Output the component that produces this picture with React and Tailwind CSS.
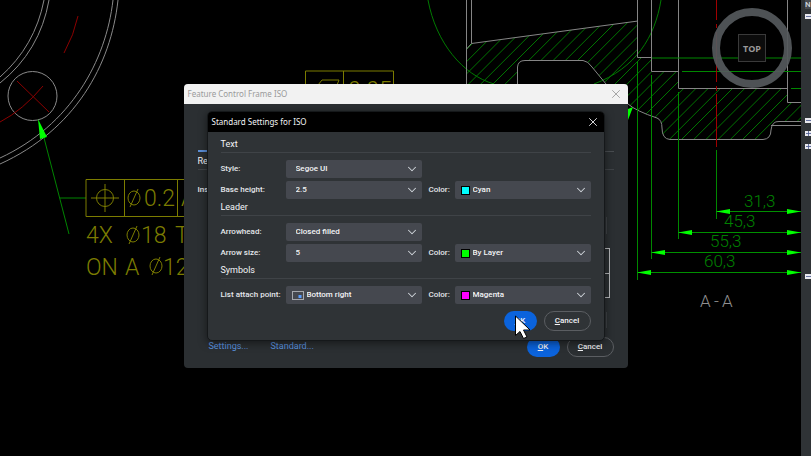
import React, { useState } from "react";
import { ChevronDown, X } from "lucide-react";

const NAMED_COLORS = ["Cyan", "By Layer", "Magenta"];

// 45 degree hatching, clipped to the cut faces
const HATCH_STEP = 12.2;
const hatch = Array.from({ length: 36 }, (_, k) => {
    const sum = 516 + k * HATCH_STEP;
    return `M${sum - 150} 150L${sum} 0`;
}).join("");

const dimensions = [
    { x: 716, y: 212, text: "31,3", tx: 744, ty: 207 },
    { x: 678, y: 233, text: "45,3", tx: 724, ty: 227 },
    { x: 651, y: 253, text: "55,3", tx: 710, ty: 247 },
    { x: 637, y: 273, text: "60,3", tx: 704, ty: 267 },
];

const Diameter = ({ x, y }) => (
    <path d={`M${x - 6} ${y}a6 7 0 1 0 12 0a6 7 0 1 0 -12 0M${x - 4} ${y + 9}L${x + 4} ${y - 9}`} />
);

const Drawing = () => (
    <svg
        className="absolute inset-0 h-full w-full"
        viewBox="0 0 801 456"
        preserveAspectRatio="xMidYMid slice"
        fill="none"
        aria-label="Flange drawing"
    >
        <clipPath id="cut-faces">
            <path d="M466 49L471 43.5L638 21V57.5H651V71.5H678V88.5H787V102H801V121H779Q772 121 771 130Q771 139 763 139H670Q662 139 662 128Q662 120 657 118Q636 111 628 104L606 84L592 67Q588 61 583 60.5H525Q518 60.5 517.5 67V84H466Z" />
        </clipPath>

        {/* flange, front view */}
        <g stroke="#8a8a8a">
            <path d="M44 0Q35 46 0 77M49 0Q40 51 0 83" />
            <path d="M113 0C106 61 71 125 0 158M118 0C111 65 75 130 0 164" />
            <circle cx="32.5" cy="96" r="24.5" />
        </g>
        <g stroke="#8b0000">
            <path d="M78 16Q74 35 64 53M17 81L49 112M43 86Q23 110 0 122" />
        </g>
        <path d="M43 134L69 234M60 198H86" stroke="#008500" />
        <path d="M38 119L47 137L40 139Z" fill="#00ff00" />

        {/* feature control frames */}
        <g stroke="#7c7c00">
            <path d="M86 179.5H200V216.5H86ZM124.5 179V217M177.5 179V217" />
            <path d="M91 198H119M105 184V212" />
            <circle cx="105" cy="198" r="8.5" />
            <path d="M305.5 90V71H393.5V90M343.5 71V90M318 85L322 80H339L335 90" />
            <Diameter x={134} y={198} />
            <Diameter x={133} y={235} />
            <Diameter x={156} y={266} />
        </g>
        <g className="font-['Roboto',sans-serif] text-[23px] font-light" fill="#7c7c00">
            <text x="144" y="206">0.2</text>
            <text x="181" y="206">A</text>
            <text x="86" y="243">4X</text>
            <text x="141" y="243">18</text>
            <text x="175" y="243">T</text>
            <text x="86" y="275">ON</text>
            <text x="125" y="275">A</text>
            <text x="163" y="275">12</text>
            <text x="348" y="98">0.05</text>
        </g>

        {/* section A-A */}
        <path d={hatch} stroke="#007400" clipPath="url(#cut-faces)" />
        <path d="M428 0C436 43 463 75 494 84M594 84C636 68 655 37 661 0" stroke="#007a00" />
        <path d="M628 109L633 107L628 120Z" fill="#00ff00" />
        <g stroke="#858585">
            <path d="M466.5 0V84M471.5 0V43.5L638 21M466.5 49L471.5 43.5" />
            <path d="M517.5 84V67Q518 60.5 525 60.5H583Q588 61 592 67L606 84" />
            <path d="M637.5 0V57.5H651.5M651.5 0V71.5H678.5M678.5 0V88.5H787.5M787.5 0V102.5H801" />
            <path d="M628 104Q636 111 657 118Q662 120 662 128Q662 139 670 139.5H763Q771 139 771 130Q772 121 779 121.5H801M771 125.5H801" />
        </g>
        <g stroke="#008800">
            <path d="M652 58H801M682 71.5H801M791 88.5H801" />
            <path d="M637.5 61V280M651.5 75V259M678.5 92V239M716.5 150V219" />
        </g>
        <path d="M716.5 0V20M716.5 24V28M716.5 32V82M716.5 86V91M716.5 94V147" stroke="#a00000" />

        {dimensions.map((d) => (
            <g key={d.text}>
                <path d={`M${d.x} ${d.y - 0.5}H801`} stroke="#009000" />
                <path
                    d={`M${d.x} ${d.y - 0.5}l14 -2.5v5ZM801 ${d.y - 0.5}l-14 -2.5v5Z`}
                    fill="#00ff00"
                />
                <text
                    x={d.tx}
                    y={d.ty}
                    className="font-['Roboto',sans-serif] text-[17px] font-light"
                    fill="#008000"
                >
                    {d.text}
                </text>
            </g>
        ))}
        <g className="font-['Roboto',sans-serif] text-[17px] font-light" fill="#909090">
            <text x="700" y="307">A</text>
            <text x="714" y="307">-</text>
            <text x="722" y="307">A</text>
        </g>

        {/* view cube */}
        <circle cx="752" cy="48" r="36" stroke="#55595c" strokeOpacity="0.92" strokeWidth="8" />
        <rect x="738.5" y="34.5" width="27" height="27" fill="#0c0c0c" stroke="#3a3a3a" />
        <text
            x="752"
            y="52"
            textAnchor="middle"
            className="font-['Open_Sans',sans-serif] text-[9px] font-bold"
            fill="#9a9a9a"
        >
            TOP
        </text>
    </svg>
);

const Toggle = ({ label, sign }) => (
    <button
        type="button"
        aria-label={label}
        className="flex h-[5px] w-full items-center justify-center bg-[#e8e8ee]"
    >
        <svg viewBox="0 0 6 6" className="h-[5px] w-[5px]" stroke="#4a5a90">
            <path d={sign === "plus" ? "M0 3H6M3 0V6" : "M0 3H6"} />
        </svg>
    </button>
);

const Palette = () => (
    <aside className="relative flex w-[10px] shrink-0 flex-col overflow-hidden bg-[#2f3336] pl-[4px] font-['Roboto',sans-serif]">
        <p className="mb-[5px] h-[9px] bg-[#474b50] text-[8px] leading-[9px] text-gray-300">N</p>
        <Toggle label="General" />
        <div className="h-[99px]" />
        <Toggle label="Text" />
        <div className="h-[8px]" />
        <Toggle label="Lines" sign="plus" />
        <div className="h-[8px]" />
        <Toggle label="Fit" sign="plus" />
        <div className="h-[125px]" />
        <Toggle label="Units" />
    </aside>
);

const Swatch = ({ color }) => {
    if (color === "Cyan") return <span className="ml-[6px] size-[9px] border border-black bg-[#00ffff]" />;
    if (color === "By Layer") return <span className="ml-[6px] size-[9px] border border-black bg-[#00ff00]" />;
    return <span className="ml-[6px] size-[9px] border border-black bg-[#ff00ff]" />;
};

const Dropdown = ({ id, value, options, onChange, icon }) => (
    <div className="flex h-[18px] min-w-0 items-center rounded-[2px] bg-[#45484f] pr-[3px]">
        {icon}
        <select
            id={id}
            value={value}
            onChange={(e) => onChange(e.target.value)}
            className={
                icon
                    ? "h-full min-w-0 flex-1 appearance-none bg-transparent pl-[3px] text-gray-100 outline-none"
                    : "h-full min-w-0 flex-1 appearance-none bg-transparent pl-[10px] text-gray-100 outline-none"
            }
        >
            {options.map((o) => (
                <option key={o}>{o}</option>
            ))}
        </select>
        <ChevronDown className="pointer-events-none size-[14px] text-gray-300" strokeWidth={1.75} />
    </div>
);

const Row = ({ id, label, options, icon, color }) => {
    const [value, setValue] = useState(options[0]);
    const [colorValue, setColorValue] = useState(color);

    return (
        <div className="grid grid-cols-[65px_1fr_33px_1fr] items-center">
            <label htmlFor={id} className="whitespace-nowrap">{label}</label>
            <Dropdown id={id} value={value} options={options} onChange={setValue} icon={icon} />
            {color && (
                <>
                    <label htmlFor={`${id}-color`} className="pl-[7px]">Color:</label>
                    <Dropdown
                        id={`${id}-color`}
                        value={colorValue}
                        options={NAMED_COLORS}
                        onChange={setColorValue}
                        icon={<Swatch color={colorValue} />}
                    />
                </>
            )}
        </div>
    );
};

const Section = ({ title, children }) => (
    <section className="flex flex-col gap-[3px]">
        <h2 className="mb-[4px] h-[15px] border-b border-[#3f4347] text-[9px] leading-[12px] font-normal text-gray-100">{title}</h2>
        {children}
    </section>
);

const AttachIcon = () => (
    <svg viewBox="0 0 12 9" className="ml-[6px] h-[9px] w-[12px]" fill="none">
        <rect x="0.5" y="0.5" width="11" height="8" stroke="#a5a8ad" />
        <rect x="6.5" y="4" width="3" height="3" fill="#5b9dff" />
    </svg>
);

const DialogButtons = () => (
    <div className="flex justify-end gap-[7px]">
        <button type="submit" className="h-[20px] w-[33px] rounded-full bg-[#0b63dc] text-gray-100">
            <u>O</u>K
        </button>
        <button type="button" className="h-[20px] w-[47px] rounded-full border border-[#5b5e62] text-gray-100">
            <u>C</u>ancel
        </button>
    </div>
);

const StandardSettings = () => (
    <form
        onSubmit={(e) => e.preventDefault()}
        className="w-[398px] max-w-full overflow-hidden rounded-[5px] border border-[#15181a] bg-[#2f3336] shadow-[0_2px_8px_rgba(0,0,0,0.5)]"
    >
        <header className="flex h-[20px] items-center justify-between bg-black pr-[4px] pl-[4px]">
            <h1 className="font-['Noto_Sans',sans-serif] font-normal text-gray-100">Standard Settings for ISO</h1>
            <button type="button" aria-label="Close">
                <X className="size-[14px] text-gray-100" strokeWidth={1.5} />
            </button>
        </header>
        <div className="flex flex-col gap-[2px] px-[13px] pt-[6px] pb-[9px]">
            <Section title="Text">
                <Row id="style" label="Style:" options={["Segoe UI", "Arial"]} />
                <Row id="height" label="Base height:" options={["2.5", "3.5"]} color="Cyan" />
            </Section>
            <Section title="Leader">
                <Row id="arrowhead" label="Arrowhead:" options={["Closed filled", "Open"]} />
                <Row id="size" label="Arrow size:" options={["5", "10"]} color="By Layer" />
            </Section>
            <Section title="Symbols">
                <Row
                    id="attach"
                    label="List attach point:"
                    options={["Bottom right", "Bottom left"]}
                    icon={<AttachIcon />}
                    color="Magenta"
                />
            </Section>
            <div className="pt-[5px]">
                <DialogButtons />
            </div>
        </div>
    </form>
);

const FeatureControlFrame = () => (
    <div className="flex w-[444px] max-w-full flex-col overflow-hidden rounded-[4px] bg-[#2b2f32]">
        <header className="flex h-[20px] shrink-0 items-center justify-between bg-[#f2f2f2] pr-[5px] pl-[4px] text-[#9a9a9a]">
            <h1 className="font-['Noto_Sans',sans-serif] font-normal">Feature Control Frame ISO</h1>
            <button type="button" aria-label="Close">
                <X className="size-[14px]" strokeWidth={1.5} />
            </button>
        </header>
        <div className="flex flex-col px-[14px] pt-[46px] pb-[9px]">
            <div className="flex h-[2px] items-center">
                <span className="h-[2px] w-[60px] bg-[#5b8fd8]" />
                <span className="h-px flex-1 bg-[#494d51]" />
            </div>
            <h2 className="h-[18px] border-b border-[#3f4347] pt-[3px] text-[9px] leading-[12px] font-normal text-gray-100">Re</h2>
            <p className="pt-[14px] leading-[12px]">Ins</p>
            <div className="mt-[21px] mr-[7px] h-[17px] border-r border-[#3f4347]" />
            <div className="mt-[14px] mr-[4px] ml-auto h-[50px] w-[60px] border border-[#b4b6b8]">
                <div className="h-[25px] border-b border-[#b4b6b8]" />
            </div>
            <div className="mt-[14px] mr-[7px] h-[16px] border-r border-[#3f4347]" />
        </div>
        <footer className="flex items-center pr-[14px] pb-[11px] pl-[25px]">
            <a href="#settings" className="w-[62px] text-[9px] font-normal text-[#5a94e0]">Settings...</a>
            <a href="#standard" className="text-[9px] font-normal text-[#5a94e0]">Standard...</a>
            <div className="flex-1">
                <DialogButtons />
            </div>
        </footer>
    </div>
);

const App = () => {
    return (
        <div className="relative flex min-h-screen overflow-hidden bg-black font-['Roboto',sans-serif] text-[8px] font-medium text-gray-200">
            <main className="relative flex-1">
                <Drawing />
            </main>
            <Palette />
            <div className="absolute inset-0 flex items-start justify-center pt-[84px]">
                <FeatureControlFrame />
            </div>
            <div className="absolute inset-0 flex items-start justify-center pt-[111px]">
                <StandardSettings />
            </div>
            {/* mouse pointer */}
            <svg
                viewBox="0 0 16 24"
                className="pointer-events-none absolute top-[315px] left-[515px] h-[24px] w-[16px]"
                fill="white"
                stroke="black"
            >
                <path d="M0.5 1V20.5L5 16.5L8.5 23.5L12 22L8.5 15H15Z" />
            </svg>
        </div>
    );
};

export default App;
